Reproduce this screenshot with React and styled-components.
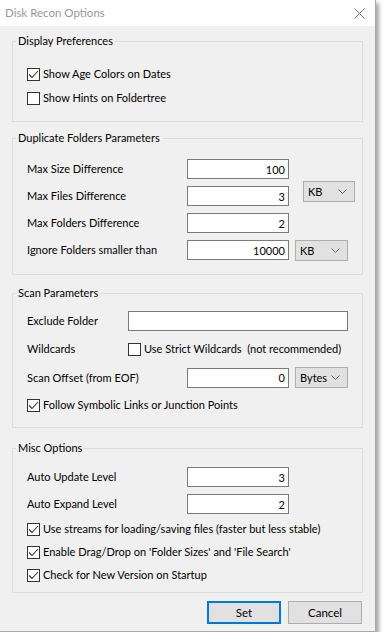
import React from 'react';
import styled, { createGlobalStyle } from 'styled-components';

const FONT = `"Segoe UI", Lato, "Noto Sans", sans-serif`;
const FS = 11;

const Global = createGlobalStyle`
  html, body { margin: 0; padding: 0; background: #ffffff; }
  body { font-family: ${FONT}; font-size: ${FS}px; color: #000; }
  * { box-sizing: border-box; }
`;

const Window = styled.div`
  width: 376px;
  height: 632px;
  background: #f0f0f0;
  border-right: 1px solid #a9a9a9;
  border-bottom: 1px solid #a9a9a9;
  box-shadow: 3px 3px 4px rgba(0, 0, 0, 0.35);
  display: flex;
  flex-direction: column;
`;

const TitleBar = styled.div`
  height: 26px;
  flex: none;
  background: #ffffff;
  display: flex;
  align-items: center;
  justify-content: space-between;
  padding: 0 10px 0 5px;
`;

const Title = styled.span`
  color: #999999;
  font-size: ${FS + 0.5}px;
  line-height: 16px;
`;

const Body = styled.div`
  padding: 0 12px;
  display: flex;
  flex-direction: column;
`;

const Group = styled.fieldset`
  margin: ${(p) => p.$top}px 0 0 0;
  padding: 0;
  min-width: 0;
  border: 1px solid #dcdcdc;
`;

const Legend = styled.legend`
  margin-left: 3px;
  padding: 0 2px;
  line-height: 16px;
  font-size: ${FS}px;
`;

const Content = styled.div`
  padding: ${(p) => p.$pad};
  display: flex;
  flex-direction: column;
`;

const CheckList = styled.div`
  display: flex;
  flex-direction: column;
  gap: ${(p) => p.$gap}px;
  margin-top: ${(p) => p.$top || 0}px;
`;

const CheckRow = styled.label`
  display: flex;
  align-items: center;
  height: 16px;
  gap: 3px;
  line-height: 16px;
  white-space: nowrap;
  flex: none;
  margin-top: ${(p) => p.$top || 0}px;
`;

const Box = styled.span`
  width: 13px;
  height: 13px;
  flex: none;
  border: 1px solid #333333;
  background: #ffffff;
  display: flex;
  align-items: center;
  justify-content: center;
`;

const ParamGrid = styled.div`
  display: grid;
  grid-template-columns: ${(p) => p.$cols};
  grid-auto-rows: 20px;
  row-gap: 7px;
  align-items: center;
`;

const Label = styled.span`
  line-height: 16px;
  white-space: nowrap;
  width: ${(p) => (p.$w ? `${p.$w}px` : 'auto')};
  flex: none;
`;

const Field = styled.input`
  width: ${(p) => p.$w}px;
  height: 20px;
  border: 1px solid #7a7a7a;
  background: #ffffff;
  font-family: ${FONT};
  font-size: ${FS}px;
  text-align: right;
  padding: 0 3px 0 3px;
  margin: 0;
  outline: none;
  color: #000;
`;

const Select = styled.div`
  width: ${(p) => p.$w}px;
  height: 21px;
  flex: none;
  margin-left: ${(p) => p.$ml}px;
  margin-top: ${(p) => p.$mt || 0}px;
  align-self: ${(p) => p.$align || 'start'};
  grid-column: ${(p) => (p.$row ? 3 : 'auto')};
  grid-row: ${(p) => p.$row || 'auto'};
  background: #e1e1e1;
  border: 1px solid #adadad;
  display: flex;
  align-items: center;
  justify-content: space-between;
  padding: 0 7px 0 4px;
  line-height: 16px;
`;

const Row = styled.div`
  display: flex;
  align-items: center;
  margin-top: ${(p) => p.$top || 0}px;
  min-height: ${(p) => p.$h || 16}px;
`;

const ButtonRow = styled.div`
  display: flex;
  justify-content: flex-end;
  gap: 7px;
  margin-top: 8px;
  padding-right: 1px;
`;

const Button = styled.button`
  width: 74px;
  height: 23px;
  margin: 0;
  padding: 0;
  background: #e1e1e1;
  border: ${(p) => (p.$default ? '2px solid #0078d7' : '1px solid #adadad')};
  font-family: ${FONT};
  font-size: ${FS + 0.5}px;
  color: #000;
`;

const Check = () => (
  <svg width="11" height="11" viewBox="0 0 11 11">
    <polyline points="1,5.5 4,8.5 10,2" fill="none" stroke="#333" strokeWidth="1.1" />
  </svg>
);

const CheckBox = ({ checked, children, top }) => (
  <CheckRow $top={top}>
    <Box>{checked && <Check />}</Box>
    <span>{children}</span>
  </CheckRow>
);

const Chevron = () => (
  <svg width="9" height="5" viewBox="0 0 9 5">
    <polyline points="0.5,0.5 4.5,4.5 8.5,0.5" fill="none" stroke="#666" strokeWidth="1" />
  </svg>
);

const Dropdown = ({ children, ...rest }) => (
  <Select {...rest}>
    <span>{children}</span>
    <Chevron />
  </Select>
);

const CloseIcon = () => (
  <svg width="11" height="11" viewBox="0 0 11 11">
    <path d="M0.5 0.5 L10.5 10.5 M10.5 0.5 L0.5 10.5" stroke="#7a7a7a" strokeWidth="1" fill="none" />
  </svg>
);

export default function App() {
  return (
    <>
      <Global />
      <Window>
        <TitleBar>
          <Title>Disk Recon Options</Title>
          <CloseIcon />
        </TitleBar>
        <Body>
          <Group $top={7}>
            <Legend>Display Preferences</Legend>
            <Content $pad="17px 14px 15px 14px">
              <CheckList $gap={8}>
                <CheckBox checked>Show Age Colors on Dates</CheckBox>
                <CheckBox>Show Hints on Foldertree</CheckBox>
              </CheckList>
            </Content>
          </Group>

          <Group $top={8}>
            <Legend>Duplicate Folders Parameters</Legend>
            <Content $pad="13px 14px 14px 14px">
              <ParamGrid $cols="160px 102px auto">
                <Label>Max Size Difference</Label>
                <Field $w={102} defaultValue="100" />
                <Label>Max Files Difference</Label>
                <Field $w={102} defaultValue="3" />
                <Label>Max Folders Difference</Label>
                <Field $w={102} defaultValue="2" />
                <Label>Ignore Folders smaller than</Label>
                <Field $w={102} defaultValue="10000" />
                <Dropdown $w={52} $ml={14} $mt={22} $row="1 / span 3">KB</Dropdown>
                <Dropdown $w={53} $ml={6} $row="4">KB</Dropdown>
              </ParamGrid>
            </Content>
          </Group>

          <Group $top={10}>
            <Legend>Scan Parameters</Legend>
            <Content $pad="10px 14px 14px 14px">
              <Row $h={20}>
                <Label $w={101}>Exclude Folder</Label>
                <Field $w={220} defaultValue="" />
              </Row>
              <Row $top={10}>
                <Label $w={101}>Wildcards</Label>
                <CheckBox>Use Strict Wildcards&nbsp; (not recommended)</CheckBox>
              </Row>
              <Row $top={10} $h={20}>
                <Label $w={160}>Scan Offset (from EOF)</Label>
                <Field $w={102} defaultValue="0" />
                <Dropdown $w={53} $ml={6} $align="center">Bytes</Dropdown>
              </Row>
              <CheckBox checked top={9}>Follow Symbolic Links or Junction Points</CheckBox>
            </Content>
          </Group>

          <Group $top={12}>
            <Legend>Misc Options</Legend>
            <Content $pad="11px 14px 9px 14px">
              <ParamGrid $cols="160px 102px">
                <Label>Auto Update Level</Label>
                <Field $w={102} defaultValue="3" />
                <Label>Auto Expand Level</Label>
                <Field $w={102} defaultValue="2" />
              </ParamGrid>
              <CheckList $gap={7} $top={7}>
                <CheckBox checked>Use streams for loading/saving files (faster but less stable)</CheckBox>
                <CheckBox checked>Enable Drag/Drop on 'Folder Sizes' and 'File Search'</CheckBox>
                <CheckBox checked>Check for New Version on Startup</CheckBox>
              </CheckList>
            </Content>
          </Group>

          <ButtonRow>
            <Button $default>Set</Button>
            <Button>Cancel</Button>
          </ButtonRow>
        </Body>
      </Window>
    </>
  );
}
